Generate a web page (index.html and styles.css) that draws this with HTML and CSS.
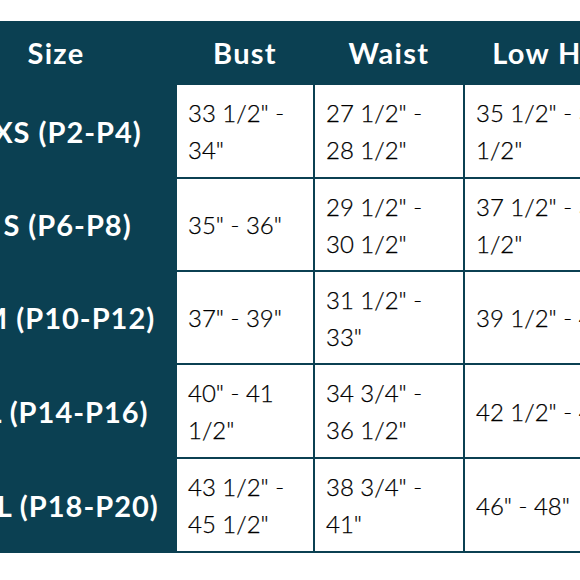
FILE: index.html
```html
<!DOCTYPE html>
<html lang="en">
<head>
<meta charset="utf-8">
<title>Size chart</title>
<link rel="stylesheet" href="styles.css">
</head>
<body>
<div class="chart">
  <div class="head">Size</div>
  <div class="head">Bust</div>
  <div class="head">Waist</div>
  <div class="head">Low Hip</div>

  <div class="size">XS (P2-P4)</div>
  <div class="cell">33 1/2" - 34"</div>
  <div class="cell">27 1/2" - 28 1/2"</div>
  <div class="cell">35 1/2" - 36 1/2"</div>

  <div class="size">S (P6-P8)</div>
  <div class="cell">35" - 36"</div>
  <div class="cell">29 1/2" - 30 1/2"</div>
  <div class="cell">37 1/2" - 38 1/2"</div>

  <div class="size">M (P10-P12)</div>
  <div class="cell">37" - 39"</div>
  <div class="cell">31 1/2" - 33"</div>
  <div class="cell">39 1/2" - 41"</div>

  <div class="size">L (P14-P16)</div>
  <div class="cell">40" - 41 1/2"</div>
  <div class="cell">34 3/4" - 36 1/2"</div>
  <div class="cell">42 1/2" - 44"</div>

  <div class="size">XL (P18-P20)</div>
  <div class="cell">43 1/2" - 45 1/2"</div>
  <div class="cell">38 3/4" - 41"</div>
  <div class="cell">46" - 48"</div>
</div>
</body>
</html>
```
FILE: styles.css
```css
html, body {
  margin: 0;
  padding: 0;
  background: #ffffff;
  overflow: hidden;
}

body {
  width: 580px;
  height: 580px;
  font-family: "Lato", "Open Sans", sans-serif;
}

.chart {
  display: grid;
  grid-template-columns: 238px 136px 148px 170px;
  grid-template-rows: 62px 92px 91px 91px 92px 92px;
  gap: 2px;
  width: max-content;
  margin: 21px 0 0 -63px;
  padding: 0 0 2px 0;
  background: #0b4052;
}

.head,
.size {
  display: flex;
  align-items: center;
  justify-content: center;
  color: #ffffff;
  font-weight: 700;
  font-size: 29px;
  letter-spacing: 1px;
  white-space: nowrap;
}

.head {
  letter-spacing: 1.3px;
}

.size {
  padding-left: 23px;
}

.cell {
  display: flex;
  align-items: center;
  background: #ffffff;
  color: #000000;
  font-size: 24px;
  font-weight: 300;
  line-height: 37px;
  padding: 0 11px;
  -webkit-text-stroke: 0.25px #000000;
}
```
